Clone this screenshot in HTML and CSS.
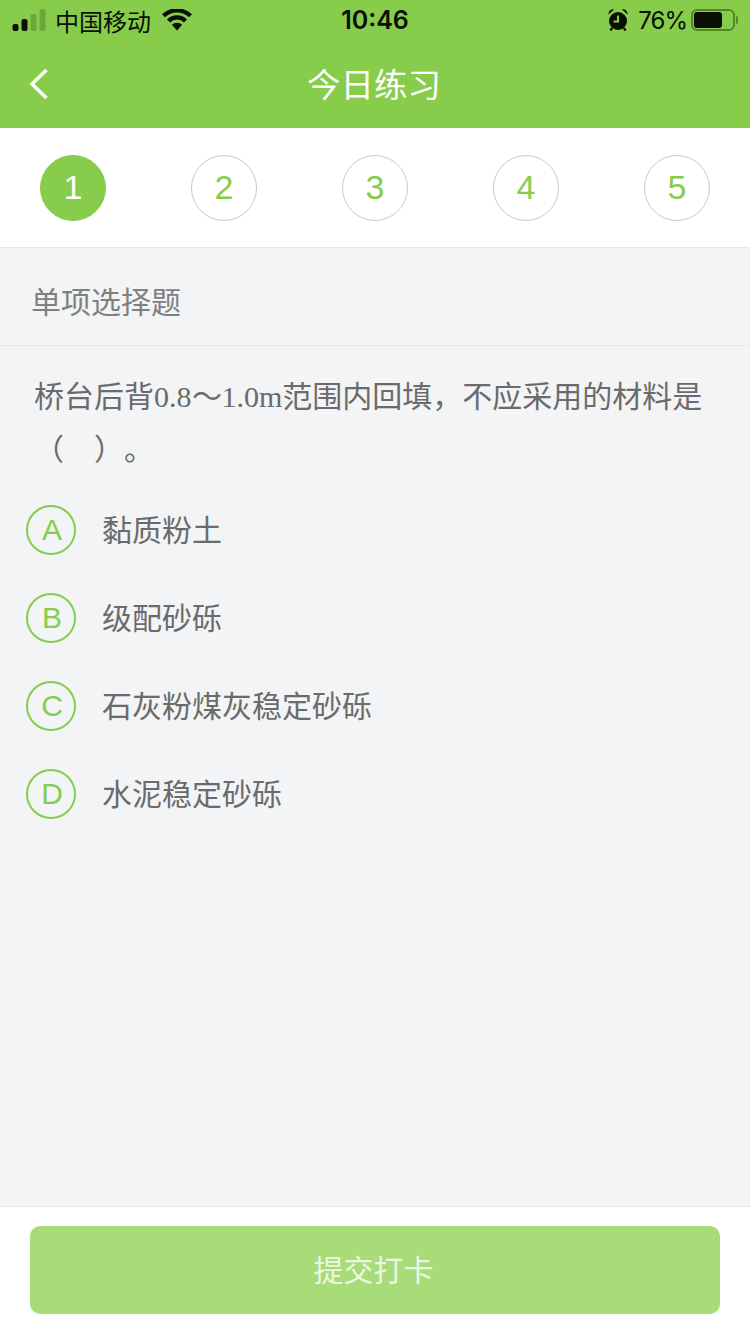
FILE: index.html
```html
<!DOCTYPE html>
<html lang="zh-CN">
<head>
  <meta charset="UTF-8">
  <meta name="viewport" content="width=device-width, initial-scale=1.0">
  <title>今日练习</title>
  <link rel="stylesheet" href="styles.css">
</head>
<body>
  <div class="page">
    <header class="header">
      <div class="status-bar">
        <div class="status-left">
          <svg class="signal" width="34" height="22" viewBox="0 0 34 22">
            <rect x="0.500" y="15" width="6" height="7" rx="2" fill="#0a0f05"/>
            <rect x="9.500" y="10" width="6" height="12" rx="2" fill="#0a0f05"/>
            <rect x="18.500" y="5" width="6" height="17" rx="2" fill="#6aa83a"/>
            <rect x="27.500" y="0" width="6" height="22" rx="2" fill="#6aa83a"/>
          </svg>
          <span class="carrier">中国移动</span>
          <svg class="wifi" width="30" height="22" viewBox="0 0 30 22">
            <path d="M15 21.500 L9.800 15.800 A7.600 7.600 0 0 1 20.200 15.800 Z" fill="#0a0f05"/>
            <path d="M6.500 12 A12 12 0 0 1 23.500 12" fill="none" stroke="#0a0f05" stroke-width="4.200"/>
            <path d="M1.500 6.800 A19.500 19.500 0 0 1 28.500 6.800" fill="none" stroke="#0a0f05" stroke-width="4.200"/>
          </svg>
        </div>
        <div class="time">10:46</div>
        <div class="status-right">
          <svg class="alarm" width="20" height="22" viewBox="0 0 20 22">
            <circle cx="10" cy="12" r="9" fill="#0a0f05"/>
            <path d="M10 6.500 V12.500 H5.500" fill="none" stroke="#87ce4a" stroke-width="2"/>
            <path d="M0.500 5.500 A4.500 4.500 0 0 1 6 0.500 Z M19.500 5.500 A4.500 4.500 0 0 0 14 0.500 Z" fill="#0a0f05"/>
            <path d="M4 19 L2.500 21.500 M16 19 L17.500 21.500" stroke="#0a0f05" stroke-width="2.400"/>
          </svg>
          <span class="battery-text">76%</span>
          <div class="battery">
            <div class="battery-level"></div>
          </div>
          <div class="battery-cap"></div>
        </div>
      </div>
      <div class="nav-bar">
        <svg class="back" width="20" height="32" viewBox="0 0 20 32">
          <path d="M17.500 2 L3 16 L17.500 30" fill="none" stroke="#fff" stroke-width="3.400"/>
        </svg>
        <h1 class="nav-title">今日练习</h1>
      </div>
    </header>

    <div class="steps">
      <div class="step active">1</div>
      <div class="step">2</div>
      <div class="step">3</div>
      <div class="step">4</div>
      <div class="step">5</div>
    </div>

    <main class="content">
      <div class="section-title">单项选择题</div>
      <p class="question">桥台后背<span class="latin">0.8～1.0m</span>范围内回填，不应采用的材料是<br>（　）。</p>
      <div class="options">
        <div class="option"><span class="letter">A</span><span class="option-text">黏质粉土</span></div>
        <div class="option"><span class="letter">B</span><span class="option-text">级配砂砾</span></div>
        <div class="option"><span class="letter">C</span><span class="option-text">石灰粉煤灰稳定砂砾</span></div>
        <div class="option"><span class="letter">D</span><span class="option-text">水泥稳定砂砾</span></div>
      </div>
    </main>

    <footer class="footer">
      <button class="submit-button">提交打卡</button>
    </footer>
  </div>
</body>
</html>
```

FILE: styles.css
```css
* {
  box-sizing: border-box;
}

body {
  margin: 0;
  padding: 0;
  font-family: "Liberation Sans", "Noto Sans CJK SC", sans-serif;
  background-color: #f2f4f6;
}

.page {
  display: flex;
  flex-direction: column;
  width: 750px;
  height: 1334px;
  overflow: hidden;
}

.header {
  height: 128px;
  background-color: #87cd4b;
}

.status-bar {
  display: grid;
  grid-template-columns: 1fr auto 1fr;
  align-items: center;
  height: 40px;
  padding: 0 12px;
  color: #0a0f05;
}

.status-left,
.status-right {
  display: flex;
  align-items: center;
}

.status-right {
  justify-content: flex-end;
}

.carrier {
  margin-left: 9px;
  font-size: 24px;
}

.wifi {
  margin-left: 11px;
}

.time {
  font-family: Inter, "Liberation Sans", sans-serif;
  font-size: 25px;
  font-weight: 600;
}

.battery-text {
  margin-left: 10px;
  font-family: Inter, "Liberation Sans", sans-serif;
  font-size: 24px;
  letter-spacing: -1px;
}

.battery {
  width: 44px;
  height: 22px;
  margin-left: 4px;
  padding: 1px;
  border: 2px solid #4f8a24;
  border-radius: 6px;
}

.battery-level {
  width: 28px;
  height: 100%;
  background-color: #0a0f05;
  border-radius: 3px;
}

.battery-cap {
  width: 2px;
  height: 8px;
  margin-left: 1px;
  background-color: #4f8a24;
  border-radius: 0 2px 2px 0;
}

.nav-bar {
  display: flex;
  align-items: center;
  justify-content: center;
  position: relative;
  height: 88px;
  padding: 0 2px 4px 0;
}

.back {
  position: absolute;
  left: 29px;
  top: 28px;
}

.nav-title {
  margin: 0;
  font-size: 33.500px;
  font-weight: 400;
  color: #fff;
}

.steps {
  display: flex;
  align-items: center;
  justify-content: space-between;
  height: 120px;
  padding: 0 40px;
  background-color: #fff;
  border-bottom: 1px solid #e6e7e9;
}

.step {
  display: flex;
  align-items: center;
  justify-content: center;
  width: 66px;
  height: 66px;
  font-size: 34px;
  color: #87cd4b;
  border: 1px solid #c9c9c9;
  border-radius: 50%;
}

.step.active {
  color: #fff;
  background-color: #87cd4b;
  border-color: #87cd4b;
}

.content {
  flex: 1;
}

.section-title {
  height: 98px;
  padding: 0 31px;
  font-size: 30px;
  line-height: 110px;
  color: #808080;
  border-bottom: 1px solid #e6e7e9;
}

.question {
  margin: 0;
  padding: 24px 34px 0;
  font-size: 30px;
  line-height: 53px;
  color: #6b6b6b;
  text-spacing-trim: space-all;
}

.latin {
  font-family: "Liberation Serif", serif;
}

.options {
  padding: 10px 26px 0;
}

.option {
  display: flex;
  align-items: center;
  height: 88px;
  font-size: 30px;
  color: #6b6b6b;
}

.option-text {
  margin-top: -4px;
}

.letter {
  display: flex;
  align-items: center;
  justify-content: center;
  width: 50px;
  height: 50px;
  margin-right: 26px;
  padding-left: 2px;
  font-size: 30px;
  color: #87cd4b;
  border: 2px solid #87cd4b;
  border-radius: 50%;
}

.footer {
  height: 128px;
  padding: 19px 30px 0;
  background-color: #fff;
  border-top: 1px solid #e6e7e9;
}

.submit-button {
  display: block;
  width: 100%;
  height: 88px;
  padding: 0 3px 4px 0;
  font-family: inherit;
  font-size: 30px;
  color: rgba(255, 255, 255, 0.8);
  background-color: #a8dc78;
  border: none;
  border-radius: 10px;
}
```
